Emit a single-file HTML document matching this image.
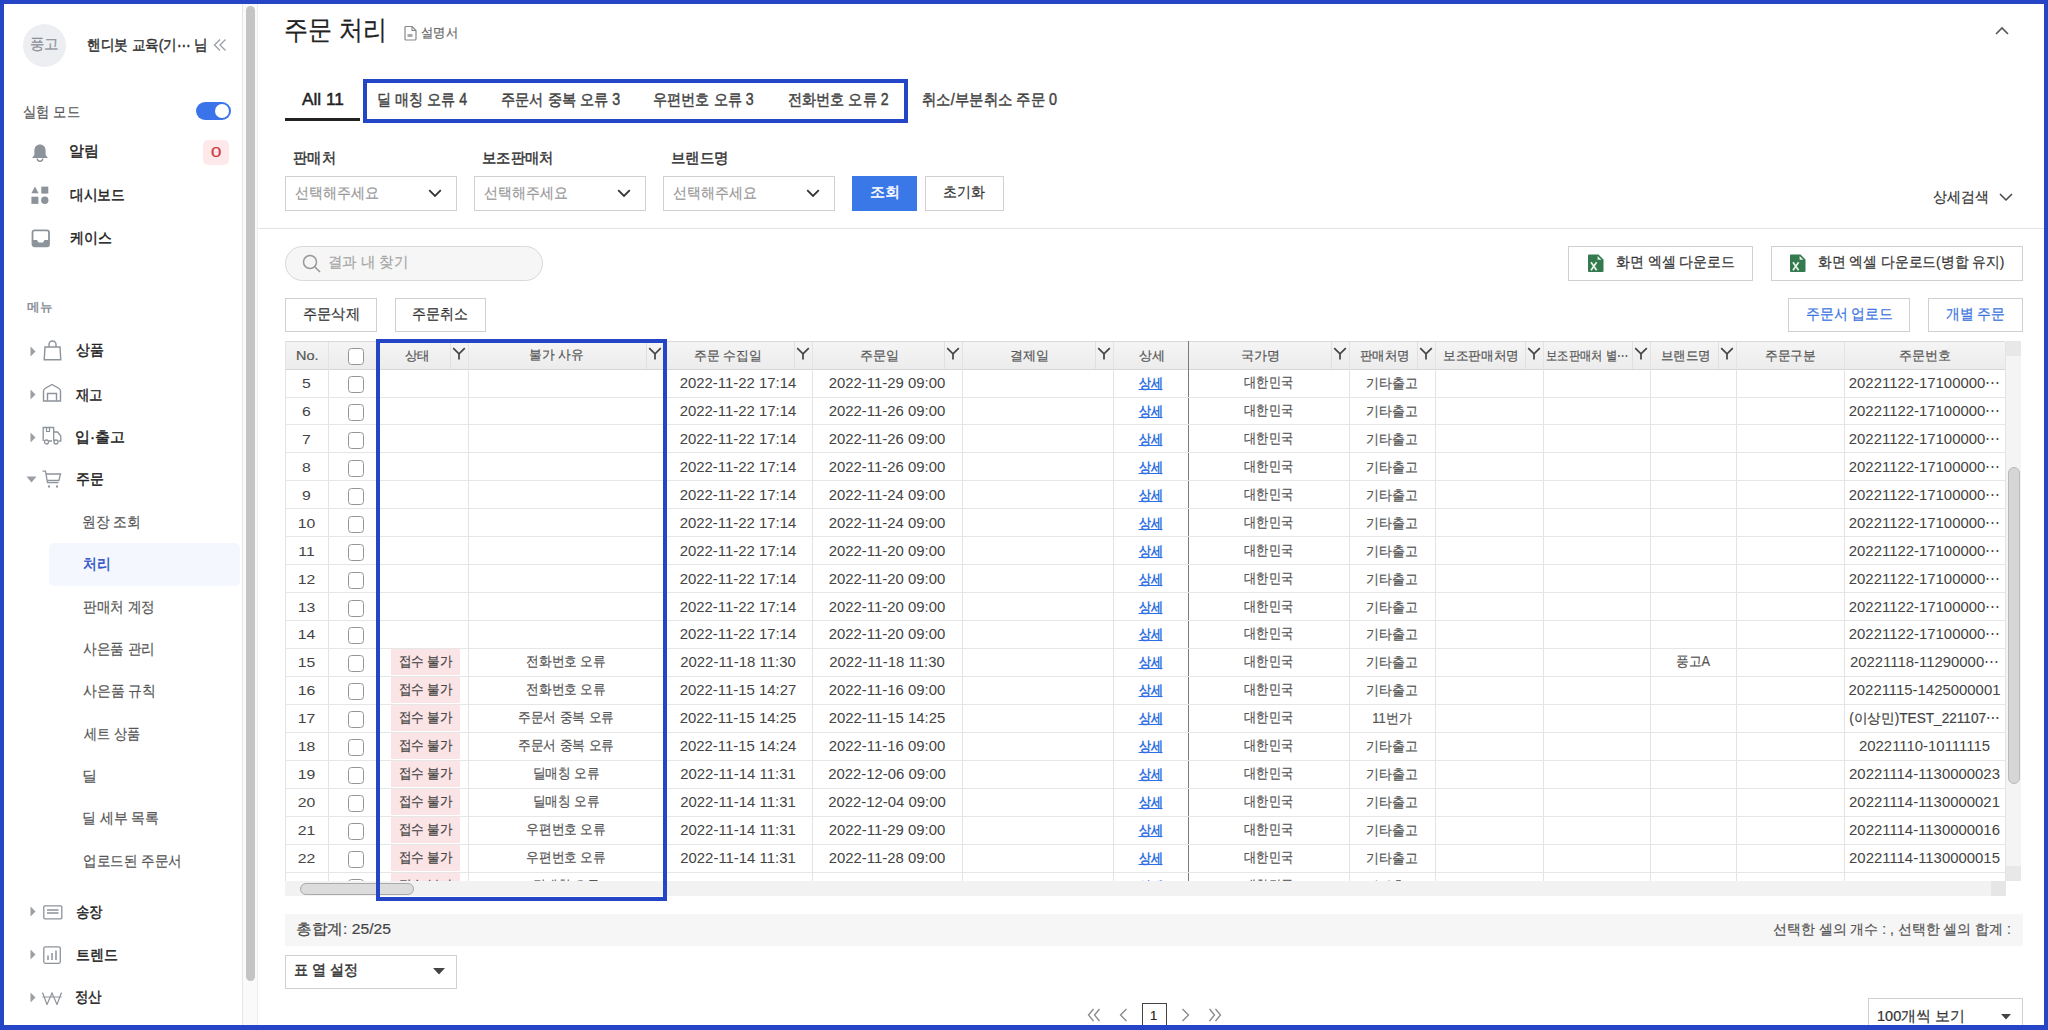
<!DOCTYPE html><html><head><meta charset="utf-8"><style>
*{box-sizing:border-box;margin:0;padding:0}
html,body{width:2048px;height:1030px;overflow:hidden;background:#fff}
body{font-family:"Liberation Sans",sans-serif;color:#333;position:relative}
.ab{position:absolute}
.t{position:absolute;white-space:nowrap;line-height:1;transform-origin:0 0}
.t.n{-webkit-text-stroke:0.2px currentColor}
.sel{position:absolute;border:1px solid #d0d0d0;background:#fff}
.hl{position:absolute;border:4.5px solid #2446c6}
.cb{position:absolute;width:16px;height:16.5px;border:1.8px solid #959595;border-radius:3.5px;background:#fff}
</style></head><body>
<div class="ab" style="left:242px;top:4px;width:1px;height:1021px;background:#e6e6e6"></div>
<div class="ab" style="left:243px;top:4px;width:14px;height:1021px;background:#fafafa"></div>
<div class="ab" style="left:257px;top:4px;width:1px;height:1021px;background:#ececec"></div>
<div class="ab" style="left:246px;top:6px;width:9px;height:975px;background:#c4c4c4;border-radius:5px"></div>
<div class="ab" style="left:23px;top:24px;width:43px;height:43px;border-radius:50%;background:#eceef1"></div>
<div class="t n" style="left:30.04px;top:36.0px;font-size:15.0px;color:#8b8f96;font-weight:normal;transform:scaleX(0.963);">풍고</div>
<div class="t" style="left:87.09px;top:37.0px;font-size:15.0px;color:#333;font-weight:normal;transform:scaleX(0.9077);-webkit-text-stroke:0.45px currentColor;">핸디봇 교육(기⋯ 님</div>
<svg class="ab" style="left:212px;top:38px" width="16" height="14" viewBox="0 0 16 14"><path d="M8 1.5 L2.5 7 L8 12.5 M13.5 1.5 L8 7 L13.5 12.5" fill="none" stroke="#9a9ea5" stroke-width="1.3"/></svg>
<div class="t n" style="left:23.11px;top:104.0px;font-size:15.0px;color:#555;font-weight:normal;transform:scaleX(0.8871);">실험 모드</div>
<div class="ab" style="left:196px;top:102px;width:35px;height:18px;border-radius:9px;background:#3b74ea"></div>
<div class="ab" style="left:214.5px;top:104px;width:14px;height:14px;border-radius:50%;background:#fff"></div>
<svg class="ab" style="left:30px;top:143px" width="20" height="20" viewBox="0 0 20 20"><path d="M10 1.5c-3.3 0-5.6 2.6-5.6 6v4.2L2.2 15h15.6l-2.2-3.3V7.5c0-3.4-2.3-6-5.6-6z" fill="#8d939b"/><path d="M7.3 15.5a2.7 2.7 0 0 0 5.4 0" fill="none" stroke="#8d939b" stroke-width="1.4"/></svg>
<div class="t" style="left:69.0px;top:143.0px;font-size:15.0px;color:#222;font-weight:normal;transform:scaleX(1.0);-webkit-text-stroke:0.45px currentColor;">알림</div>
<div class="ab" style="left:203px;top:140px;width:26px;height:25px;border-radius:5px;background:#fde9ea"></div>
<div class="t n" style="left:210.67px;top:145.0px;font-size:14.0px;color:#d33a45;font-weight:normal;transform:scaleX(1.3333);">0</div>
<svg class="ab" style="left:31px;top:186px" width="18" height="19" viewBox="0 0 18 19"><path d="M4 0.5 L7.6 7.3 L0.4 7.3Z" fill="#8d939b"/><rect x="10.3" y="0.6" width="7" height="7" fill="#8d939b"/><rect x="0.4" y="10.7" width="7" height="7.2" fill="#8d939b"/><circle cx="13.8" cy="14.3" r="3.7" fill="#8d939b"/></svg>
<div class="t" style="left:70.09px;top:187.0px;font-size:15.0px;color:#222;font-weight:normal;transform:scaleX(0.9138);-webkit-text-stroke:0.45px currentColor;">대시보드</div>
<svg class="ab" style="left:31px;top:229px" width="20" height="19" viewBox="0 0 20 19"><rect x="1.5" y="1.3" width="16.5" height="16" rx="2" fill="none" stroke="#8d939b" stroke-width="1.8"/><path d="M1.5 11 h4.5 l1.5 2.4 h4.5 l1.5-2.4 h4.5 v5.3 a1 1 0 0 1-1 1 h-14.5 a1 1 0 0 1-1-1z" fill="#8d939b"/></svg>
<div class="t" style="left:70.07px;top:230.0px;font-size:15.0px;color:#222;font-weight:normal;transform:scaleX(0.9302);-webkit-text-stroke:0.45px currentColor;">케이스</div>
<div class="t" style="left:26.95px;top:301.0px;font-size:12.0px;color:#8b9099;font-weight:bold;transform:scaleX(1.0455);">메뉴</div>
<svg class="ab" style="left:30px;top:346px" width="6" height="11" viewBox="0 0 6 11"><path d="M0.5 0.5 L5.5 5.5 L0.5 10.5Z" fill="#9a9ea5"/></svg>
<svg class="ab" style="left:43px;top:340px" width="19" height="21" viewBox="0 0 19 21"><path d="M2 7 h15 l0.8 12.8 h-16.6z" fill="none" stroke="#8d939b" stroke-width="1.4"/><path d="M6 7 V4.5 a3.5 3.5 0 0 1 7 0 V7" fill="none" stroke="#8d939b" stroke-width="1.4"/></svg>
<div class="t" style="left:76.07px;top:342.0px;font-size:15.0px;color:#222;font-weight:normal;transform:scaleX(0.9286);-webkit-text-stroke:0.45px currentColor;">상품</div>
<svg class="ab" style="left:30px;top:389px" width="6" height="11" viewBox="0 0 6 11"><path d="M0.5 0.5 L5.5 5.5 L0.5 10.5Z" fill="#9a9ea5"/></svg>
<svg class="ab" style="left:42px;top:383px" width="20" height="19" viewBox="0 0 20 19"><path d="M1.5 18 V8 Q1.5 6.5 3 5.5 L10 1.5 L17 5.5 Q18.5 6.5 18.5 8 V18z" fill="none" stroke="#8d939b" stroke-width="1.4"/><path d="M5.5 18 V10.5 h9 V18" fill="none" stroke="#8d939b" stroke-width="1.4"/></svg>
<div class="t" style="left:76.0px;top:387.0px;font-size:15.0px;color:#222;font-weight:normal;transform:scaleX(0.8966);-webkit-text-stroke:0.45px currentColor;">재고</div>
<svg class="ab" style="left:30px;top:432px" width="6" height="11" viewBox="0 0 6 11"><path d="M0.5 0.5 L5.5 5.5 L0.5 10.5Z" fill="#9a9ea5"/></svg>
<svg class="ab" style="left:42px;top:426px" width="20" height="20" viewBox="0 0 20 20"><path d="M1.2 15 V1.5 h10.5 V15 M11.7 6 h3.8 l3.3 4 V15 h-2 M7 15 h3" fill="none" stroke="#8d939b" stroke-width="1.3"/><path d="M4.5 1.5 v4 h3 v-4" fill="none" stroke="#8d939b" stroke-width="1.2"/><circle cx="4.5" cy="16" r="2" fill="#fff" stroke="#8d939b" stroke-width="1.3"/><circle cx="14" cy="16" r="2" fill="#fff" stroke="#8d939b" stroke-width="1.3"/></svg>
<div class="t" style="left:75.0px;top:429.0px;font-size:15.0px;color:#222;font-weight:normal;transform:scaleX(1.0);-webkit-text-stroke:0.45px currentColor;">입·출고</div>
<svg class="ab" style="left:26px;top:476px" width="11" height="7" viewBox="0 0 11 7"><path d="M0.5 0.5 L10.5 0.5 L5.5 6.5Z" fill="#9a9ea5"/></svg>
<svg class="ab" style="left:42px;top:470px" width="20" height="19" viewBox="0 0 20 19"><path d="M0.5 1.2 h3 l2 11.5 h11" fill="none" stroke="#8d939b" stroke-width="1.3"/><path d="M4 4 h14.5 l-1.6 6.5 h-11.5" fill="none" stroke="#8d939b" stroke-width="1.3"/><rect x="6" y="15.5" width="2" height="2" fill="#8d939b"/><rect x="14" y="15.5" width="2" height="2" fill="#8d939b"/></svg>
<div class="t" style="left:76.07px;top:471.0px;font-size:15.0px;color:#222;font-weight:normal;transform:scaleX(0.9286);-webkit-text-stroke:0.45px currentColor;">주문</div>
<div class="ab" style="left:49px;top:543px;width:191px;height:43px;background:#f4f7fd;border-radius:5px"></div>
<div class="t n" style="left:82.17px;top:514.0px;font-size:15.0px;color:#555;font-weight:normal;transform:scaleX(0.9167);">원장 조회</div>
<div class="t" style="left:83.07px;top:556.0px;font-size:15.0px;color:#2b50c8;font-weight:normal;transform:scaleX(0.9259);-webkit-text-stroke:0.45px currentColor;">처리</div>
<div class="t n" style="left:83.09px;top:599.0px;font-size:15.0px;color:#555;font-weight:normal;transform:scaleX(0.9079);">판매처 계정</div>
<div class="t n" style="left:83.09px;top:641.0px;font-size:15.0px;color:#555;font-weight:normal;transform:scaleX(0.9079);">사은품 관리</div>
<div class="t n" style="left:83.08px;top:683.0px;font-size:15.0px;color:#555;font-weight:normal;transform:scaleX(0.9211);">사은품 규칙</div>
<div class="t n" style="left:84.0px;top:726.0px;font-size:15.0px;color:#555;font-weight:normal;transform:scaleX(0.873);">세트 상품</div>
<div class="t n" style="left:82.0px;top:768.0px;font-size:15.0px;color:#555;font-weight:normal;transform:scaleX(1.0);">딜</div>
<div class="t n" style="left:82.15px;top:810.0px;font-size:15.0px;color:#555;font-weight:normal;transform:scaleX(0.9241);">딜 세부 목록</div>
<div class="t n" style="left:83.09px;top:853.0px;font-size:15.0px;color:#555;font-weight:normal;transform:scaleX(0.9057);">업로드된 주문서</div>
<svg class="ab" style="left:30px;top:906px" width="6" height="11" viewBox="0 0 6 11"><path d="M0.5 0.5 L5.5 5.5 L0.5 10.5Z" fill="#9a9ea5"/></svg>
<svg class="ab" style="left:43px;top:905px" width="20" height="15" viewBox="0 0 20 15"><rect x="0.8" y="0.8" width="18" height="13" rx="1" fill="none" stroke="#8d939b" stroke-width="1.3"/><path d="M4 5 h11.5 M4 8 h11.5" stroke="#8d939b" stroke-width="1.3"/></svg>
<div class="t" style="left:76.1px;top:904.0px;font-size:15.0px;color:#222;font-weight:normal;transform:scaleX(0.8966);-webkit-text-stroke:0.45px currentColor;">송장</div>
<svg class="ab" style="left:30px;top:949px" width="6" height="11" viewBox="0 0 6 11"><path d="M0.5 0.5 L5.5 5.5 L0.5 10.5Z" fill="#9a9ea5"/></svg>
<svg class="ab" style="left:43px;top:946px" width="19" height="19" viewBox="0 0 19 19"><rect x="0.8" y="0.8" width="16.5" height="16.5" rx="1.5" fill="none" stroke="#8d939b" stroke-width="1.3"/><path d="M5 14 V9.5 M9 14 V7 M13 14 V4.5" stroke="#8d939b" stroke-width="1.5"/></svg>
<div class="t" style="left:76.07px;top:947.0px;font-size:15.0px;color:#222;font-weight:normal;transform:scaleX(0.9302);-webkit-text-stroke:0.45px currentColor;">트렌드</div>
<svg class="ab" style="left:30px;top:992px" width="6" height="11" viewBox="0 0 6 11"><path d="M0.5 0.5 L5.5 5.5 L0.5 10.5Z" fill="#9a9ea5"/></svg>
<svg class="ab" style="left:42px;top:992px" width="20" height="13" viewBox="0 0 20 13"><path d="M0.5 0.5 L5 12.5 L10 1 L15 12.5 L19.5 0.5 M0.5 5 h19" fill="none" stroke="#8d939b" stroke-width="1.2"/></svg>
<div class="t" style="left:75.1px;top:989.0px;font-size:15.0px;color:#222;font-weight:normal;transform:scaleX(0.8966);-webkit-text-stroke:0.45px currentColor;">정산</div>
<div class="t n" style="left:284.22px;top:17.0px;font-size:27.0px;color:#222;font-weight:normal;transform:scaleX(0.8909);">주문 처리</div>
<svg class="ab" style="left:404px;top:26px" width="13" height="15" viewBox="0 0 13 15"><path d="M1 1.5 a1 1 0 0 1 1-1 h6 l4 4 v8.5 a1 1 0 0 1-1 1 h-9 a1 1 0 0 1-1-1z" fill="none" stroke="#888" stroke-width="1.2"/><path d="M8 0.5 v4 h4" fill="none" stroke="#888" stroke-width="1.1"/><rect x="3.5" y="8" width="5" height="3" fill="#aaa"/></svg>
<div class="t n" style="left:421.06px;top:26.0px;font-size:13.0px;color:#666;font-weight:normal;transform:scaleX(0.9444);">설명서</div>
<svg class="ab" style="left:1995px;top:26px" width="14" height="9" viewBox="0 0 14 9"><path d="M1 8 L7 2 L13 8" fill="none" stroke="#555" stroke-width="1.6"/></svg>
<div class="t" style="left:302.0px;top:92.0px;font-size:16.0px;color:#222;font-weight:normal;transform:scaleX(1.0789);-webkit-text-stroke:0.45px currentColor;">All 11</div>
<div class="ab" style="left:285px;top:118px;width:75px;height:2.5px;background:#222"></div>
<div class="t" style="left:377.24px;top:92.0px;font-size:16.0px;color:#444;font-weight:normal;transform:scaleX(0.88);-webkit-text-stroke:0.45px currentColor;">딜 매칭 오류 4</div>
<div class="t" style="left:501.11px;top:92.0px;font-size:16.0px;color:#444;font-weight:normal;transform:scaleX(0.8872);-webkit-text-stroke:0.45px currentColor;">주문서 중복 오류 3</div>
<div class="t" style="left:653.12px;top:92.0px;font-size:16.0px;color:#444;font-weight:normal;transform:scaleX(0.885);-webkit-text-stroke:0.45px currentColor;">우편번호 오류 3</div>
<div class="t" style="left:788.12px;top:92.0px;font-size:16.0px;color:#444;font-weight:normal;transform:scaleX(0.8839);-webkit-text-stroke:0.45px currentColor;">전화번호 오류 2</div>
<div class="t" style="left:922.1px;top:92.0px;font-size:16.0px;color:#444;font-weight:normal;transform:scaleX(0.8993);-webkit-text-stroke:0.45px currentColor;">취소/부분취소 주문 0</div>
<div class="hl" style="left:363px;top:79px;width:545px;height:44px"></div>
<div class="t" style="left:293.05px;top:150.0px;font-size:15.0px;color:#333;font-weight:normal;transform:scaleX(0.9524);-webkit-text-stroke:0.45px currentColor;">판매처</div>
<div class="t" style="left:482.04px;top:150.0px;font-size:15.0px;color:#333;font-weight:normal;transform:scaleX(0.9583);-webkit-text-stroke:0.45px currentColor;">보조판매처</div>
<div class="t" style="left:671.04px;top:150.0px;font-size:15.0px;color:#333;font-weight:normal;transform:scaleX(0.9649);-webkit-text-stroke:0.45px currentColor;">브랜드명</div>
<div class="sel" style="left:285px;top:176px;width:172px;height:35px"></div>
<div class="t n" style="left:295.07px;top:185.0px;font-size:15.0px;color:#9a9a9a;font-weight:normal;transform:scaleX(0.9318);">선택해주세요</div>
<svg class="ab" style="left:428px;top:189px" width="14" height="9" viewBox="0 0 14 9"><path d="M1.2 1.2 L7 7 L12.8 1.2" fill="none" stroke="#333" stroke-width="1.8"/></svg>
<div class="sel" style="left:474px;top:176px;width:172px;height:35px"></div>
<div class="t n" style="left:484.07px;top:185.0px;font-size:15.0px;color:#9a9a9a;font-weight:normal;transform:scaleX(0.9318);">선택해주세요</div>
<svg class="ab" style="left:617px;top:189px" width="14" height="9" viewBox="0 0 14 9"><path d="M1.2 1.2 L7 7 L12.8 1.2" fill="none" stroke="#333" stroke-width="1.8"/></svg>
<div class="sel" style="left:663px;top:176px;width:172px;height:35px"></div>
<div class="t n" style="left:673.07px;top:185.0px;font-size:15.0px;color:#9a9a9a;font-weight:normal;transform:scaleX(0.9318);">선택해주세요</div>
<svg class="ab" style="left:806px;top:189px" width="14" height="9" viewBox="0 0 14 9"><path d="M1.2 1.2 L7 7 L12.8 1.2" fill="none" stroke="#333" stroke-width="1.8"/></svg>
<div class="ab" style="left:852px;top:176px;width:65px;height:35px;background:#3b78e7"></div>
<div class="t" style="left:870.0px;top:184.0px;font-size:15.0px;color:#fff;font-weight:normal;transform:scaleX(1.0);-webkit-text-stroke:0.45px currentColor;">조회</div>
<div class="sel" style="left:925px;top:176px;width:79px;height:35px"></div>
<div class="t n" style="left:943.14px;top:184.0px;font-size:15.0px;color:#333;font-weight:normal;transform:scaleX(0.9302);">초기화</div>
<div class="t n" style="left:1933.07px;top:189.0px;font-size:15.0px;color:#333;font-weight:normal;transform:scaleX(0.9298);">상세검색</div>
<svg class="ab" style="left:1999px;top:193px" width="14" height="9" viewBox="0 0 14 9"><path d="M1 1 L7 7 L13 1" fill="none" stroke="#444" stroke-width="1.5"/></svg>
<div class="ab" style="left:258px;top:228px;width:1786px;height:1px;background:#e3e3e3"></div>
<div class="ab" style="left:285px;top:246px;width:258px;height:35px;border-radius:18px;background:#f6f6f6;border:1px solid #d9d9d9"></div>
<svg class="ab" style="left:302px;top:254px" width="20" height="19" viewBox="0 0 20 19"><circle cx="8" cy="8" r="6.5" fill="none" stroke="#999" stroke-width="1.5"/><path d="M12.8 12.8 L18 18" stroke="#999" stroke-width="1.6"/></svg>
<div class="t n" style="left:328.08px;top:254.0px;font-size:15.0px;color:#a5a5a5;font-weight:normal;transform:scaleX(0.962);">결과 내 찾기</div>
<div class="sel" style="left:1568px;top:246px;width:185px;height:35px"></div>
<svg class="ab" style="left:1588px;top:254px" width="16" height="18" viewBox="0 0 16 18"><path d="M1 0.5 h9.5 l5 5 v11.5 a1 1 0 0 1 -1 1 h-13.5 a1 1 0 0 1 -1 -1 v-15.5 a1 1 0 0 1 1 -1z" fill="#347a4e"/><path d="M9.6 2 V5.8 H13.4z" fill="#e9f5ec"/><path d="M3 8.3 L8.6 16.2 M8.6 8.3 L3 16.2" stroke="#e9f5ec" stroke-width="1.7"/></svg>
<div class="t n" style="left:1616.07px;top:254.0px;font-size:15.0px;color:#333;font-weight:normal;transform:scaleX(0.9286);">화면 엑셀 다운로드</div>
<div class="sel" style="left:1771px;top:246px;width:252px;height:35px"></div>
<svg class="ab" style="left:1790px;top:254px" width="16" height="18" viewBox="0 0 16 18"><path d="M1 0.5 h9.5 l5 5 v11.5 a1 1 0 0 1 -1 1 h-13.5 a1 1 0 0 1 -1 -1 v-15.5 a1 1 0 0 1 1 -1z" fill="#347a4e"/><path d="M9.6 2 V5.8 H13.4z" fill="#e9f5ec"/><path d="M3 8.3 L8.6 16.2 M8.6 8.3 L3 16.2" stroke="#e9f5ec" stroke-width="1.7"/></svg>
<div class="t n" style="left:1818.08px;top:254.0px;font-size:15.0px;color:#333;font-weight:normal;transform:scaleX(0.9204);">화면 엑셀 다운로드(병합 유지)</div>
<div class="sel" style="left:285px;top:298px;width:92px;height:34px"></div>
<div class="t n" style="left:303.05px;top:306.0px;font-size:15.0px;color:#333;font-weight:normal;transform:scaleX(0.9474);">주문삭제</div>
<div class="sel" style="left:395px;top:298px;width:91px;height:34px"></div>
<div class="t n" style="left:412.07px;top:306.0px;font-size:15.0px;color:#333;font-weight:normal;transform:scaleX(0.931);">주문취소</div>
<div class="sel" style="left:1788px;top:298px;width:122px;height:34px"></div>
<div class="t n" style="left:1806.08px;top:306.0px;font-size:15.0px;color:#3a74e0;font-weight:normal;transform:scaleX(0.9239);">주문서 업로드</div>
<div class="sel" style="left:1928px;top:298px;width:95px;height:34px"></div>
<div class="t n" style="left:1946.08px;top:306.0px;font-size:15.0px;color:#3a74e0;font-weight:normal;transform:scaleX(0.9194);">개별 주문</div>
<div class="ab" style="left:285px;top:341px;width:1720px;height:540px;overflow:hidden">
<div class="ab" style="left:0;top:0;width:1720px;height:28px;background:linear-gradient(#f5f5f5,#ececec)"></div>
<div class="ab" style="left:0;top:0;width:1720px;height:1px;background:#d9d9d9"></div>
<div class="ab" style="left:0;top:28px;width:1720px;height:1px;background:#d6d6d6"></div>
</div>
<div class="t n" style="left:295.89px;top:349.0px;font-size:13.0px;color:#555;font-weight:normal;transform:scaleX(1.1111);">No.</div>
<div class="cb" style="left:348px;top:348px"></div>
<div class="ab" style="left:450px;top:342px;width:1px;height:27px;background:#e0e0e0"></div>
<svg class="ab" style="left:452px;top:347px" width="14" height="13" viewBox="0 0 14 13"><path d="M1.2 1.2 L7 6.8 L12.8 1.2 M7 6.8 V12.5" fill="none" stroke="#444" stroke-width="1.7"/></svg>
<div class="t n" style="left:405.04px;top:349.0px;font-size:13.0px;color:#555;font-weight:normal;transform:scaleX(0.9565);">상태</div>
<div class="ab" style="left:646px;top:342px;width:1px;height:27px;background:#e0e0e0"></div>
<svg class="ab" style="left:648px;top:347px" width="14" height="13" viewBox="0 0 14 13"><path d="M1.2 1.2 L7 6.8 L12.8 1.2 M7 6.8 V12.5" fill="none" stroke="#444" stroke-width="1.7"/></svg>
<div class="t n" style="left:529.04px;top:348.0px;font-size:13.0px;color:#555;font-weight:normal;transform:scaleX(0.9808);">불가 사유</div>
<div class="ab" style="left:794px;top:342px;width:1px;height:27px;background:#e0e0e0"></div>
<svg class="ab" style="left:796px;top:347px" width="14" height="13" viewBox="0 0 14 13"><path d="M1.2 1.2 L7 6.8 L12.8 1.2 M7 6.8 V12.5" fill="none" stroke="#444" stroke-width="1.7"/></svg>
<div class="t n" style="left:694.03px;top:349.0px;font-size:13.0px;color:#555;font-weight:normal;transform:scaleX(0.9846);">주문 수집일</div>
<div class="ab" style="left:944px;top:342px;width:1px;height:27px;background:#e0e0e0"></div>
<svg class="ab" style="left:946px;top:347px" width="14" height="13" viewBox="0 0 14 13"><path d="M1.2 1.2 L7 6.8 L12.8 1.2 M7 6.8 V12.5" fill="none" stroke="#444" stroke-width="1.7"/></svg>
<div class="t n" style="left:860.0px;top:349.0px;font-size:13.0px;color:#555;font-weight:normal;transform:scaleX(1.0);">주문일</div>
<div class="ab" style="left:1095px;top:342px;width:1px;height:27px;background:#e0e0e0"></div>
<svg class="ab" style="left:1097px;top:347px" width="14" height="13" viewBox="0 0 14 13"><path d="M1.2 1.2 L7 6.8 L12.8 1.2 M7 6.8 V12.5" fill="none" stroke="#444" stroke-width="1.7"/></svg>
<div class="t n" style="left:1010.0px;top:349.0px;font-size:13.0px;color:#555;font-weight:normal;transform:scaleX(1.0);">결제일</div>
<div class="t n" style="left:1139.0px;top:349.0px;font-size:13.0px;color:#555;font-weight:normal;transform:scaleX(1.0);">상세</div>
<div class="ab" style="left:1331px;top:342px;width:1px;height:27px;background:#e0e0e0"></div>
<svg class="ab" style="left:1333px;top:347px" width="14" height="13" viewBox="0 0 14 13"><path d="M1.2 1.2 L7 6.8 L12.8 1.2 M7 6.8 V12.5" fill="none" stroke="#444" stroke-width="1.7"/></svg>
<div class="t n" style="left:1241.0px;top:349.0px;font-size:13.0px;color:#555;font-weight:normal;transform:scaleX(1.0);">국가명</div>
<div class="ab" style="left:1417px;top:342px;width:1px;height:27px;background:#e0e0e0"></div>
<svg class="ab" style="left:1419px;top:347px" width="14" height="13" viewBox="0 0 14 13"><path d="M1.2 1.2 L7 6.8 L12.8 1.2 M7 6.8 V12.5" fill="none" stroke="#444" stroke-width="1.7"/></svg>
<div class="t n" style="left:1360.04px;top:349.0px;font-size:13.0px;color:#555;font-weight:normal;transform:scaleX(0.9592);">판매처명</div>
<div class="ab" style="left:1525px;top:342px;width:1px;height:27px;background:#e0e0e0"></div>
<svg class="ab" style="left:1527px;top:347px" width="14" height="13" viewBox="0 0 14 13"><path d="M1.2 1.2 L7 6.8 L12.8 1.2 M7 6.8 V12.5" fill="none" stroke="#444" stroke-width="1.7"/></svg>
<div class="t n" style="left:1443.05px;top:349.0px;font-size:13.0px;color:#555;font-weight:normal;transform:scaleX(0.973);">보조판매처명</div>
<div class="ab" style="left:1632px;top:342px;width:1px;height:27px;background:#e0e0e0"></div>
<svg class="ab" style="left:1634px;top:347px" width="14" height="13" viewBox="0 0 14 13"><path d="M1.2 1.2 L7 6.8 L12.8 1.2 M7 6.8 V12.5" fill="none" stroke="#444" stroke-width="1.7"/></svg>
<div class="t n" style="left:1546.26px;top:349.0px;font-size:13.0px;color:#555;font-weight:normal;transform:scaleX(0.8696);">보조판매처 별⋯</div>
<div class="ab" style="left:1718px;top:342px;width:1px;height:27px;background:#e0e0e0"></div>
<svg class="ab" style="left:1720px;top:347px" width="14" height="13" viewBox="0 0 14 13"><path d="M1.2 1.2 L7 6.8 L12.8 1.2 M7 6.8 V12.5" fill="none" stroke="#444" stroke-width="1.7"/></svg>
<div class="t n" style="left:1661.04px;top:349.0px;font-size:13.0px;color:#555;font-weight:normal;transform:scaleX(0.9592);">브랜드명</div>
<div class="t n" style="left:1765.04px;top:349.0px;font-size:13.0px;color:#555;font-weight:normal;transform:scaleX(0.9796);">주문구분</div>
<div class="t n" style="left:1899.0px;top:349.0px;font-size:13.0px;color:#555;font-weight:normal;transform:scaleX(1.0);">주문번호</div>
<div class="ab" style="left:285px;top:341px;width:1px;height:540px;background:#e3e3e3"></div>
<div class="ab" style="left:328px;top:342px;width:1px;height:540px;background:#e3e3e3"></div>
<div class="ab" style="left:376px;top:342px;width:1px;height:540px;background:#e3e3e3"></div>
<div class="ab" style="left:468px;top:342px;width:1px;height:540px;background:#e3e3e3"></div>
<div class="ab" style="left:664px;top:342px;width:1px;height:540px;background:#e3e3e3"></div>
<div class="ab" style="left:812px;top:342px;width:1px;height:540px;background:#e3e3e3"></div>
<div class="ab" style="left:962px;top:342px;width:1px;height:540px;background:#e3e3e3"></div>
<div class="ab" style="left:1113px;top:342px;width:1px;height:540px;background:#e3e3e3"></div>
<div class="ab" style="left:1188px;top:341px;width:1px;height:540px;background:#7a7a7a"></div>
<div class="ab" style="left:1349px;top:342px;width:1px;height:540px;background:#e3e3e3"></div>
<div class="ab" style="left:1435px;top:342px;width:1px;height:540px;background:#e3e3e3"></div>
<div class="ab" style="left:1543px;top:342px;width:1px;height:540px;background:#e3e3e3"></div>
<div class="ab" style="left:1650px;top:342px;width:1px;height:540px;background:#e3e3e3"></div>
<div class="ab" style="left:1736px;top:342px;width:1px;height:540px;background:#e3e3e3"></div>
<div class="ab" style="left:1844px;top:342px;width:1px;height:540px;background:#e3e3e3"></div>
<div class="ab" style="left:2005px;top:342px;width:1px;height:540px;background:#e3e3e3"></div>
<div class="ab" style="left:285px;top:341px;width:1720px;height:540px;overflow:hidden">
<div class="ab" style="left:0;top:56px;width:1720px;height:1px;background:#e6e6e6"></div>
<div class="cb" style="left:63px;top:35px"></div>
<div class="ab" style="left:0;top:83px;width:1720px;height:1px;background:#e6e6e6"></div>
<div class="cb" style="left:63px;top:63px"></div>
<div class="ab" style="left:0;top:111px;width:1720px;height:1px;background:#e6e6e6"></div>
<div class="cb" style="left:63px;top:91px"></div>
<div class="ab" style="left:0;top:139px;width:1720px;height:1px;background:#e6e6e6"></div>
<div class="cb" style="left:63px;top:119px"></div>
<div class="ab" style="left:0;top:167px;width:1720px;height:1px;background:#e6e6e6"></div>
<div class="cb" style="left:63px;top:147px"></div>
<div class="ab" style="left:0;top:195px;width:1720px;height:1px;background:#e6e6e6"></div>
<div class="cb" style="left:63px;top:175px"></div>
<div class="ab" style="left:0;top:223px;width:1720px;height:1px;background:#e6e6e6"></div>
<div class="cb" style="left:63px;top:203px"></div>
<div class="ab" style="left:0;top:251px;width:1720px;height:1px;background:#e6e6e6"></div>
<div class="cb" style="left:63px;top:231px"></div>
<div class="ab" style="left:0;top:279px;width:1720px;height:1px;background:#e6e6e6"></div>
<div class="cb" style="left:63px;top:259px"></div>
<div class="ab" style="left:0;top:307px;width:1720px;height:1px;background:#e6e6e6"></div>
<div class="cb" style="left:63px;top:286px"></div>
<div class="ab" style="left:0;top:335px;width:1720px;height:1px;background:#e6e6e6"></div>
<div class="cb" style="left:63px;top:314px"></div>
<div class="ab" style="left:106px;top:308px;width:69px;height:26px;background:#fbe4e6"></div>
<div class="ab" style="left:0;top:363px;width:1720px;height:1px;background:#e6e6e6"></div>
<div class="cb" style="left:63px;top:342px"></div>
<div class="ab" style="left:106px;top:336px;width:69px;height:26px;background:#fbe4e6"></div>
<div class="ab" style="left:0;top:391px;width:1720px;height:1px;background:#e6e6e6"></div>
<div class="cb" style="left:63px;top:370px"></div>
<div class="ab" style="left:106px;top:364px;width:69px;height:26px;background:#fbe4e6"></div>
<div class="ab" style="left:0;top:419px;width:1720px;height:1px;background:#e6e6e6"></div>
<div class="cb" style="left:63px;top:398px"></div>
<div class="ab" style="left:106px;top:392px;width:69px;height:26px;background:#fbe4e6"></div>
<div class="ab" style="left:0;top:447px;width:1720px;height:1px;background:#e6e6e6"></div>
<div class="cb" style="left:63px;top:426px"></div>
<div class="ab" style="left:106px;top:420px;width:69px;height:26px;background:#fbe4e6"></div>
<div class="ab" style="left:0;top:475px;width:1720px;height:1px;background:#e6e6e6"></div>
<div class="cb" style="left:63px;top:454px"></div>
<div class="ab" style="left:106px;top:448px;width:69px;height:26px;background:#fbe4e6"></div>
<div class="ab" style="left:0;top:503px;width:1720px;height:1px;background:#e6e6e6"></div>
<div class="cb" style="left:63px;top:482px"></div>
<div class="ab" style="left:106px;top:476px;width:69px;height:26px;background:#fbe4e6"></div>
<div class="ab" style="left:0;top:531px;width:1720px;height:1px;background:#e6e6e6"></div>
<div class="cb" style="left:63px;top:510px"></div>
<div class="ab" style="left:106px;top:504px;width:69px;height:26px;background:#fbe4e6"></div>
<div class="ab" style="left:0;top:558px;width:1720px;height:1px;background:#e6e6e6"></div>
<div class="cb" style="left:63px;top:538px"></div>
<div class="ab" style="left:106px;top:532px;width:69px;height:26px;background:#fbe4e6"></div>
<div class="t" style="left:0px;top:36.0px;width:43px;text-align:center;font-size:13.5px;color:#444;font-weight:normal;transform:scaleX(1.1667);transform-origin:50% 0;">5</div>
<div class="t" style="left:379px;top:35.0px;width:148px;text-align:center;font-size:14.0px;color:#444;font-weight:normal;transform:scaleX(1.0648);transform-origin:50% 0;">2022-11-22 17:14</div>
<div class="t" style="left:527px;top:35.0px;width:150px;text-align:center;font-size:14.0px;color:#444;font-weight:normal;transform:scaleX(1.0648);transform-origin:50% 0;">2022-11-29 09:00</div>
<div class="t" style="left:828px;top:35.0px;width:75px;text-align:center;font-size:14.0px;color:#2f6fe4;font-weight:bold;transform:scaleX(0.8571);transform-origin:50% 0;text-decoration:underline">상세</div>
<div class="t n" style="left:903px;top:34.0px;width:161px;text-align:center;font-size:14.0px;color:#555;font-weight:normal;transform:scaleX(0.8704);transform-origin:50% 0;">대한민국</div>
<div class="t n" style="left:1064px;top:35.0px;width:86px;text-align:center;font-size:14.0px;color:#555;font-weight:normal;transform:scaleX(0.9231);transform-origin:50% 0;">기타출고</div>
<div class="t" style="left:1559px;top:35.0px;width:161px;text-align:center;font-size:14.0px;color:#444;font-weight:normal;transform:scaleX(1.0647);transform-origin:50% 0;">20221122-17100000⋯</div>
<div class="t" style="left:0px;top:64.0px;width:43px;text-align:center;font-size:13.5px;color:#444;font-weight:normal;transform:scaleX(1.1667);transform-origin:50% 0;">6</div>
<div class="t" style="left:379px;top:63.0px;width:148px;text-align:center;font-size:14.0px;color:#444;font-weight:normal;transform:scaleX(1.0648);transform-origin:50% 0;">2022-11-22 17:14</div>
<div class="t" style="left:527px;top:63.0px;width:150px;text-align:center;font-size:14.0px;color:#444;font-weight:normal;transform:scaleX(1.0648);transform-origin:50% 0;">2022-11-26 09:00</div>
<div class="t" style="left:828px;top:63.0px;width:75px;text-align:center;font-size:14.0px;color:#2f6fe4;font-weight:bold;transform:scaleX(0.8571);transform-origin:50% 0;text-decoration:underline">상세</div>
<div class="t n" style="left:903px;top:62.0px;width:161px;text-align:center;font-size:14.0px;color:#555;font-weight:normal;transform:scaleX(0.8704);transform-origin:50% 0;">대한민국</div>
<div class="t n" style="left:1064px;top:63.0px;width:86px;text-align:center;font-size:14.0px;color:#555;font-weight:normal;transform:scaleX(0.9231);transform-origin:50% 0;">기타출고</div>
<div class="t" style="left:1559px;top:63.0px;width:161px;text-align:center;font-size:14.0px;color:#444;font-weight:normal;transform:scaleX(1.0647);transform-origin:50% 0;">20221122-17100000⋯</div>
<div class="t" style="left:0px;top:92.0px;width:43px;text-align:center;font-size:13.5px;color:#444;font-weight:normal;transform:scaleX(1.1667);transform-origin:50% 0;">7</div>
<div class="t" style="left:379px;top:91.0px;width:148px;text-align:center;font-size:14.0px;color:#444;font-weight:normal;transform:scaleX(1.0648);transform-origin:50% 0;">2022-11-22 17:14</div>
<div class="t" style="left:527px;top:91.0px;width:150px;text-align:center;font-size:14.0px;color:#444;font-weight:normal;transform:scaleX(1.0648);transform-origin:50% 0;">2022-11-26 09:00</div>
<div class="t" style="left:828px;top:91.0px;width:75px;text-align:center;font-size:14.0px;color:#2f6fe4;font-weight:bold;transform:scaleX(0.8571);transform-origin:50% 0;text-decoration:underline">상세</div>
<div class="t n" style="left:903px;top:90.0px;width:161px;text-align:center;font-size:14.0px;color:#555;font-weight:normal;transform:scaleX(0.8704);transform-origin:50% 0;">대한민국</div>
<div class="t n" style="left:1064px;top:91.0px;width:86px;text-align:center;font-size:14.0px;color:#555;font-weight:normal;transform:scaleX(0.9231);transform-origin:50% 0;">기타출고</div>
<div class="t" style="left:1559px;top:91.0px;width:161px;text-align:center;font-size:14.0px;color:#444;font-weight:normal;transform:scaleX(1.0647);transform-origin:50% 0;">20221122-17100000⋯</div>
<div class="t" style="left:0px;top:120.0px;width:43px;text-align:center;font-size:13.5px;color:#444;font-weight:normal;transform:scaleX(1.1667);transform-origin:50% 0;">8</div>
<div class="t" style="left:379px;top:119.0px;width:148px;text-align:center;font-size:14.0px;color:#444;font-weight:normal;transform:scaleX(1.0648);transform-origin:50% 0;">2022-11-22 17:14</div>
<div class="t" style="left:527px;top:119.0px;width:150px;text-align:center;font-size:14.0px;color:#444;font-weight:normal;transform:scaleX(1.0648);transform-origin:50% 0;">2022-11-26 09:00</div>
<div class="t" style="left:828px;top:119.0px;width:75px;text-align:center;font-size:14.0px;color:#2f6fe4;font-weight:bold;transform:scaleX(0.8571);transform-origin:50% 0;text-decoration:underline">상세</div>
<div class="t n" style="left:903px;top:118.0px;width:161px;text-align:center;font-size:14.0px;color:#555;font-weight:normal;transform:scaleX(0.8704);transform-origin:50% 0;">대한민국</div>
<div class="t n" style="left:1064px;top:119.0px;width:86px;text-align:center;font-size:14.0px;color:#555;font-weight:normal;transform:scaleX(0.9231);transform-origin:50% 0;">기타출고</div>
<div class="t" style="left:1559px;top:119.0px;width:161px;text-align:center;font-size:14.0px;color:#444;font-weight:normal;transform:scaleX(1.0647);transform-origin:50% 0;">20221122-17100000⋯</div>
<div class="t" style="left:0px;top:148.0px;width:43px;text-align:center;font-size:13.5px;color:#444;font-weight:normal;transform:scaleX(1.1667);transform-origin:50% 0;">9</div>
<div class="t" style="left:379px;top:147.0px;width:148px;text-align:center;font-size:14.0px;color:#444;font-weight:normal;transform:scaleX(1.0648);transform-origin:50% 0;">2022-11-22 17:14</div>
<div class="t" style="left:527px;top:147.0px;width:150px;text-align:center;font-size:14.0px;color:#444;font-weight:normal;transform:scaleX(1.0648);transform-origin:50% 0;">2022-11-24 09:00</div>
<div class="t" style="left:828px;top:147.0px;width:75px;text-align:center;font-size:14.0px;color:#2f6fe4;font-weight:bold;transform:scaleX(0.8571);transform-origin:50% 0;text-decoration:underline">상세</div>
<div class="t n" style="left:903px;top:146.0px;width:161px;text-align:center;font-size:14.0px;color:#555;font-weight:normal;transform:scaleX(0.8704);transform-origin:50% 0;">대한민국</div>
<div class="t n" style="left:1064px;top:147.0px;width:86px;text-align:center;font-size:14.0px;color:#555;font-weight:normal;transform:scaleX(0.9231);transform-origin:50% 0;">기타출고</div>
<div class="t" style="left:1559px;top:147.0px;width:161px;text-align:center;font-size:14.0px;color:#444;font-weight:normal;transform:scaleX(1.0647);transform-origin:50% 0;">20221122-17100000⋯</div>
<div class="t" style="left:0px;top:176.0px;width:43px;text-align:center;font-size:13.5px;color:#444;font-weight:normal;transform:scaleX(1.1667);transform-origin:50% 0;">10</div>
<div class="t" style="left:379px;top:175.0px;width:148px;text-align:center;font-size:14.0px;color:#444;font-weight:normal;transform:scaleX(1.0648);transform-origin:50% 0;">2022-11-22 17:14</div>
<div class="t" style="left:527px;top:175.0px;width:150px;text-align:center;font-size:14.0px;color:#444;font-weight:normal;transform:scaleX(1.0648);transform-origin:50% 0;">2022-11-24 09:00</div>
<div class="t" style="left:828px;top:175.0px;width:75px;text-align:center;font-size:14.0px;color:#2f6fe4;font-weight:bold;transform:scaleX(0.8571);transform-origin:50% 0;text-decoration:underline">상세</div>
<div class="t n" style="left:903px;top:174.0px;width:161px;text-align:center;font-size:14.0px;color:#555;font-weight:normal;transform:scaleX(0.8704);transform-origin:50% 0;">대한민국</div>
<div class="t n" style="left:1064px;top:175.0px;width:86px;text-align:center;font-size:14.0px;color:#555;font-weight:normal;transform:scaleX(0.9231);transform-origin:50% 0;">기타출고</div>
<div class="t" style="left:1559px;top:175.0px;width:161px;text-align:center;font-size:14.0px;color:#444;font-weight:normal;transform:scaleX(1.0647);transform-origin:50% 0;">20221122-17100000⋯</div>
<div class="t" style="left:0px;top:204.0px;width:43px;text-align:center;font-size:13.5px;color:#444;font-weight:normal;transform:scaleX(1.1667);transform-origin:50% 0;">11</div>
<div class="t" style="left:379px;top:203.0px;width:148px;text-align:center;font-size:14.0px;color:#444;font-weight:normal;transform:scaleX(1.0648);transform-origin:50% 0;">2022-11-22 17:14</div>
<div class="t" style="left:527px;top:203.0px;width:150px;text-align:center;font-size:14.0px;color:#444;font-weight:normal;transform:scaleX(1.0648);transform-origin:50% 0;">2022-11-20 09:00</div>
<div class="t" style="left:828px;top:203.0px;width:75px;text-align:center;font-size:14.0px;color:#2f6fe4;font-weight:bold;transform:scaleX(0.8571);transform-origin:50% 0;text-decoration:underline">상세</div>
<div class="t n" style="left:903px;top:202.0px;width:161px;text-align:center;font-size:14.0px;color:#555;font-weight:normal;transform:scaleX(0.8704);transform-origin:50% 0;">대한민국</div>
<div class="t n" style="left:1064px;top:203.0px;width:86px;text-align:center;font-size:14.0px;color:#555;font-weight:normal;transform:scaleX(0.9231);transform-origin:50% 0;">기타출고</div>
<div class="t" style="left:1559px;top:203.0px;width:161px;text-align:center;font-size:14.0px;color:#444;font-weight:normal;transform:scaleX(1.0647);transform-origin:50% 0;">20221122-17100000⋯</div>
<div class="t" style="left:0px;top:232.0px;width:43px;text-align:center;font-size:13.5px;color:#444;font-weight:normal;transform:scaleX(1.1667);transform-origin:50% 0;">12</div>
<div class="t" style="left:379px;top:231.0px;width:148px;text-align:center;font-size:14.0px;color:#444;font-weight:normal;transform:scaleX(1.0648);transform-origin:50% 0;">2022-11-22 17:14</div>
<div class="t" style="left:527px;top:231.0px;width:150px;text-align:center;font-size:14.0px;color:#444;font-weight:normal;transform:scaleX(1.0648);transform-origin:50% 0;">2022-11-20 09:00</div>
<div class="t" style="left:828px;top:231.0px;width:75px;text-align:center;font-size:14.0px;color:#2f6fe4;font-weight:bold;transform:scaleX(0.8571);transform-origin:50% 0;text-decoration:underline">상세</div>
<div class="t n" style="left:903px;top:230.0px;width:161px;text-align:center;font-size:14.0px;color:#555;font-weight:normal;transform:scaleX(0.8704);transform-origin:50% 0;">대한민국</div>
<div class="t n" style="left:1064px;top:231.0px;width:86px;text-align:center;font-size:14.0px;color:#555;font-weight:normal;transform:scaleX(0.9231);transform-origin:50% 0;">기타출고</div>
<div class="t" style="left:1559px;top:231.0px;width:161px;text-align:center;font-size:14.0px;color:#444;font-weight:normal;transform:scaleX(1.0647);transform-origin:50% 0;">20221122-17100000⋯</div>
<div class="t" style="left:0px;top:260.0px;width:43px;text-align:center;font-size:13.5px;color:#444;font-weight:normal;transform:scaleX(1.1667);transform-origin:50% 0;">13</div>
<div class="t" style="left:379px;top:259.0px;width:148px;text-align:center;font-size:14.0px;color:#444;font-weight:normal;transform:scaleX(1.0648);transform-origin:50% 0;">2022-11-22 17:14</div>
<div class="t" style="left:527px;top:259.0px;width:150px;text-align:center;font-size:14.0px;color:#444;font-weight:normal;transform:scaleX(1.0648);transform-origin:50% 0;">2022-11-20 09:00</div>
<div class="t" style="left:828px;top:259.0px;width:75px;text-align:center;font-size:14.0px;color:#2f6fe4;font-weight:bold;transform:scaleX(0.8571);transform-origin:50% 0;text-decoration:underline">상세</div>
<div class="t n" style="left:903px;top:258.0px;width:161px;text-align:center;font-size:14.0px;color:#555;font-weight:normal;transform:scaleX(0.8704);transform-origin:50% 0;">대한민국</div>
<div class="t n" style="left:1064px;top:259.0px;width:86px;text-align:center;font-size:14.0px;color:#555;font-weight:normal;transform:scaleX(0.9231);transform-origin:50% 0;">기타출고</div>
<div class="t" style="left:1559px;top:259.0px;width:161px;text-align:center;font-size:14.0px;color:#444;font-weight:normal;transform:scaleX(1.0647);transform-origin:50% 0;">20221122-17100000⋯</div>
<div class="t" style="left:0px;top:287.0px;width:43px;text-align:center;font-size:13.5px;color:#444;font-weight:normal;transform:scaleX(1.1667);transform-origin:50% 0;">14</div>
<div class="t" style="left:379px;top:286.0px;width:148px;text-align:center;font-size:14.0px;color:#444;font-weight:normal;transform:scaleX(1.0648);transform-origin:50% 0;">2022-11-22 17:14</div>
<div class="t" style="left:527px;top:286.0px;width:150px;text-align:center;font-size:14.0px;color:#444;font-weight:normal;transform:scaleX(1.0648);transform-origin:50% 0;">2022-11-20 09:00</div>
<div class="t" style="left:828px;top:286.0px;width:75px;text-align:center;font-size:14.0px;color:#2f6fe4;font-weight:bold;transform:scaleX(0.8571);transform-origin:50% 0;text-decoration:underline">상세</div>
<div class="t n" style="left:903px;top:285.0px;width:161px;text-align:center;font-size:14.0px;color:#555;font-weight:normal;transform:scaleX(0.8704);transform-origin:50% 0;">대한민국</div>
<div class="t n" style="left:1064px;top:286.0px;width:86px;text-align:center;font-size:14.0px;color:#555;font-weight:normal;transform:scaleX(0.9231);transform-origin:50% 0;">기타출고</div>
<div class="t" style="left:1559px;top:286.0px;width:161px;text-align:center;font-size:14.0px;color:#444;font-weight:normal;transform:scaleX(1.0647);transform-origin:50% 0;">20221122-17100000⋯</div>
<div class="t" style="left:0px;top:315.0px;width:43px;text-align:center;font-size:13.5px;color:#444;font-weight:normal;transform:scaleX(1.1667);transform-origin:50% 0;">15</div>
<div class="t n" style="left:106px;top:313.0px;width:69px;text-align:center;font-size:14.0px;color:#444;font-weight:normal;transform:scaleX(0.8966);transform-origin:50% 0;">접수 불가</div>
<div class="t n" style="left:183px;top:313.0px;width:196px;text-align:center;font-size:14.0px;color:#555;font-weight:normal;transform:scaleX(0.9048);transform-origin:50% 0;">전화번호 오류</div>
<div class="t" style="left:379px;top:314.0px;width:148px;text-align:center;font-size:14.0px;color:#444;font-weight:normal;transform:scaleX(1.0648);transform-origin:50% 0;">2022-11-18 11:30</div>
<div class="t" style="left:527px;top:314.0px;width:150px;text-align:center;font-size:14.0px;color:#444;font-weight:normal;transform:scaleX(1.0648);transform-origin:50% 0;">2022-11-18 11:30</div>
<div class="t" style="left:828px;top:314.0px;width:75px;text-align:center;font-size:14.0px;color:#2f6fe4;font-weight:bold;transform:scaleX(0.8571);transform-origin:50% 0;text-decoration:underline">상세</div>
<div class="t n" style="left:903px;top:313.0px;width:161px;text-align:center;font-size:14.0px;color:#555;font-weight:normal;transform:scaleX(0.8704);transform-origin:50% 0;">대한민국</div>
<div class="t n" style="left:1064px;top:314.0px;width:86px;text-align:center;font-size:14.0px;color:#555;font-weight:normal;transform:scaleX(0.9231);transform-origin:50% 0;">기타출고</div>
<div class="t n" style="left:1365px;top:313.0px;width:86px;text-align:center;font-size:14.0px;color:#555;font-weight:normal;transform:scaleX(0.9143);transform-origin:50% 0;">풍고A</div>
<div class="t" style="left:1559px;top:314.0px;width:161px;text-align:center;font-size:14.0px;color:#444;font-weight:normal;transform:scaleX(1.0647);transform-origin:50% 0;">20221118-11290000⋯</div>
<div class="t" style="left:0px;top:343.0px;width:43px;text-align:center;font-size:13.5px;color:#444;font-weight:normal;transform:scaleX(1.1667);transform-origin:50% 0;">16</div>
<div class="t n" style="left:106px;top:341.0px;width:69px;text-align:center;font-size:14.0px;color:#444;font-weight:normal;transform:scaleX(0.8966);transform-origin:50% 0;">접수 불가</div>
<div class="t n" style="left:183px;top:341.0px;width:196px;text-align:center;font-size:14.0px;color:#555;font-weight:normal;transform:scaleX(0.9048);transform-origin:50% 0;">전화번호 오류</div>
<div class="t" style="left:379px;top:342.0px;width:148px;text-align:center;font-size:14.0px;color:#444;font-weight:normal;transform:scaleX(1.0648);transform-origin:50% 0;">2022-11-15 14:27</div>
<div class="t" style="left:527px;top:342.0px;width:150px;text-align:center;font-size:14.0px;color:#444;font-weight:normal;transform:scaleX(1.0648);transform-origin:50% 0;">2022-11-16 09:00</div>
<div class="t" style="left:828px;top:342.0px;width:75px;text-align:center;font-size:14.0px;color:#2f6fe4;font-weight:bold;transform:scaleX(0.8571);transform-origin:50% 0;text-decoration:underline">상세</div>
<div class="t n" style="left:903px;top:341.0px;width:161px;text-align:center;font-size:14.0px;color:#555;font-weight:normal;transform:scaleX(0.8704);transform-origin:50% 0;">대한민국</div>
<div class="t n" style="left:1064px;top:342.0px;width:86px;text-align:center;font-size:14.0px;color:#555;font-weight:normal;transform:scaleX(0.9231);transform-origin:50% 0;">기타출고</div>
<div class="t" style="left:1559px;top:342.0px;width:161px;text-align:center;font-size:14.0px;color:#444;font-weight:normal;transform:scaleX(1.0647);transform-origin:50% 0;">20221115-1425000001</div>
<div class="t" style="left:0px;top:371.0px;width:43px;text-align:center;font-size:13.5px;color:#444;font-weight:normal;transform:scaleX(1.1667);transform-origin:50% 0;">17</div>
<div class="t n" style="left:106px;top:369.0px;width:69px;text-align:center;font-size:14.0px;color:#444;font-weight:normal;transform:scaleX(0.8966);transform-origin:50% 0;">접수 불가</div>
<div class="t n" style="left:183px;top:369.0px;width:196px;text-align:center;font-size:14.0px;color:#555;font-weight:normal;transform:scaleX(0.9048);transform-origin:50% 0;">주문서 중복 오류</div>
<div class="t" style="left:379px;top:370.0px;width:148px;text-align:center;font-size:14.0px;color:#444;font-weight:normal;transform:scaleX(1.0648);transform-origin:50% 0;">2022-11-15 14:25</div>
<div class="t" style="left:527px;top:370.0px;width:150px;text-align:center;font-size:14.0px;color:#444;font-weight:normal;transform:scaleX(1.0648);transform-origin:50% 0;">2022-11-15 14:25</div>
<div class="t" style="left:828px;top:370.0px;width:75px;text-align:center;font-size:14.0px;color:#2f6fe4;font-weight:bold;transform:scaleX(0.8571);transform-origin:50% 0;text-decoration:underline">상세</div>
<div class="t n" style="left:903px;top:369.0px;width:161px;text-align:center;font-size:14.0px;color:#555;font-weight:normal;transform:scaleX(0.8704);transform-origin:50% 0;">대한민국</div>
<div class="t n" style="left:1064px;top:370.0px;width:86px;text-align:center;font-size:14.0px;color:#555;font-weight:normal;transform:scaleX(0.9231);transform-origin:50% 0;">11번가</div>
<div class="t n" style="left:1559px;top:370.0px;width:161px;text-align:center;font-size:14.0px;color:#444;font-weight:normal;transform:scaleX(0.9737);transform-origin:50% 0;">(이상민)TEST_221107⋯</div>
<div class="t" style="left:0px;top:399.0px;width:43px;text-align:center;font-size:13.5px;color:#444;font-weight:normal;transform:scaleX(1.1667);transform-origin:50% 0;">18</div>
<div class="t n" style="left:106px;top:397.0px;width:69px;text-align:center;font-size:14.0px;color:#444;font-weight:normal;transform:scaleX(0.8966);transform-origin:50% 0;">접수 불가</div>
<div class="t n" style="left:183px;top:397.0px;width:196px;text-align:center;font-size:14.0px;color:#555;font-weight:normal;transform:scaleX(0.9048);transform-origin:50% 0;">주문서 중복 오류</div>
<div class="t" style="left:379px;top:398.0px;width:148px;text-align:center;font-size:14.0px;color:#444;font-weight:normal;transform:scaleX(1.0648);transform-origin:50% 0;">2022-11-15 14:24</div>
<div class="t" style="left:527px;top:398.0px;width:150px;text-align:center;font-size:14.0px;color:#444;font-weight:normal;transform:scaleX(1.0648);transform-origin:50% 0;">2022-11-16 09:00</div>
<div class="t" style="left:828px;top:398.0px;width:75px;text-align:center;font-size:14.0px;color:#2f6fe4;font-weight:bold;transform:scaleX(0.8571);transform-origin:50% 0;text-decoration:underline">상세</div>
<div class="t n" style="left:903px;top:397.0px;width:161px;text-align:center;font-size:14.0px;color:#555;font-weight:normal;transform:scaleX(0.8704);transform-origin:50% 0;">대한민국</div>
<div class="t n" style="left:1064px;top:398.0px;width:86px;text-align:center;font-size:14.0px;color:#555;font-weight:normal;transform:scaleX(0.9231);transform-origin:50% 0;">기타출고</div>
<div class="t" style="left:1559px;top:398.0px;width:161px;text-align:center;font-size:14.0px;color:#444;font-weight:normal;transform:scaleX(1.0647);transform-origin:50% 0;">20221110-10111115</div>
<div class="t" style="left:0px;top:427.0px;width:43px;text-align:center;font-size:13.5px;color:#444;font-weight:normal;transform:scaleX(1.1667);transform-origin:50% 0;">19</div>
<div class="t n" style="left:106px;top:425.0px;width:69px;text-align:center;font-size:14.0px;color:#444;font-weight:normal;transform:scaleX(0.8966);transform-origin:50% 0;">접수 불가</div>
<div class="t n" style="left:183px;top:425.0px;width:196px;text-align:center;font-size:14.0px;color:#555;font-weight:normal;transform:scaleX(0.9048);transform-origin:50% 0;">딜매칭 오류</div>
<div class="t" style="left:379px;top:426.0px;width:148px;text-align:center;font-size:14.0px;color:#444;font-weight:normal;transform:scaleX(1.0648);transform-origin:50% 0;">2022-11-14 11:31</div>
<div class="t" style="left:527px;top:426.0px;width:150px;text-align:center;font-size:14.0px;color:#444;font-weight:normal;transform:scaleX(1.0648);transform-origin:50% 0;">2022-12-06 09:00</div>
<div class="t" style="left:828px;top:426.0px;width:75px;text-align:center;font-size:14.0px;color:#2f6fe4;font-weight:bold;transform:scaleX(0.8571);transform-origin:50% 0;text-decoration:underline">상세</div>
<div class="t n" style="left:903px;top:425.0px;width:161px;text-align:center;font-size:14.0px;color:#555;font-weight:normal;transform:scaleX(0.8704);transform-origin:50% 0;">대한민국</div>
<div class="t n" style="left:1064px;top:426.0px;width:86px;text-align:center;font-size:14.0px;color:#555;font-weight:normal;transform:scaleX(0.9231);transform-origin:50% 0;">기타출고</div>
<div class="t" style="left:1559px;top:426.0px;width:161px;text-align:center;font-size:14.0px;color:#444;font-weight:normal;transform:scaleX(1.0647);transform-origin:50% 0;">20221114-1130000023</div>
<div class="t" style="left:0px;top:455.0px;width:43px;text-align:center;font-size:13.5px;color:#444;font-weight:normal;transform:scaleX(1.1667);transform-origin:50% 0;">20</div>
<div class="t n" style="left:106px;top:453.0px;width:69px;text-align:center;font-size:14.0px;color:#444;font-weight:normal;transform:scaleX(0.8966);transform-origin:50% 0;">접수 불가</div>
<div class="t n" style="left:183px;top:453.0px;width:196px;text-align:center;font-size:14.0px;color:#555;font-weight:normal;transform:scaleX(0.9048);transform-origin:50% 0;">딜매칭 오류</div>
<div class="t" style="left:379px;top:454.0px;width:148px;text-align:center;font-size:14.0px;color:#444;font-weight:normal;transform:scaleX(1.0648);transform-origin:50% 0;">2022-11-14 11:31</div>
<div class="t" style="left:527px;top:454.0px;width:150px;text-align:center;font-size:14.0px;color:#444;font-weight:normal;transform:scaleX(1.0648);transform-origin:50% 0;">2022-12-04 09:00</div>
<div class="t" style="left:828px;top:454.0px;width:75px;text-align:center;font-size:14.0px;color:#2f6fe4;font-weight:bold;transform:scaleX(0.8571);transform-origin:50% 0;text-decoration:underline">상세</div>
<div class="t n" style="left:903px;top:453.0px;width:161px;text-align:center;font-size:14.0px;color:#555;font-weight:normal;transform:scaleX(0.8704);transform-origin:50% 0;">대한민국</div>
<div class="t n" style="left:1064px;top:454.0px;width:86px;text-align:center;font-size:14.0px;color:#555;font-weight:normal;transform:scaleX(0.9231);transform-origin:50% 0;">기타출고</div>
<div class="t" style="left:1559px;top:454.0px;width:161px;text-align:center;font-size:14.0px;color:#444;font-weight:normal;transform:scaleX(1.0647);transform-origin:50% 0;">20221114-1130000021</div>
<div class="t" style="left:0px;top:483.0px;width:43px;text-align:center;font-size:13.5px;color:#444;font-weight:normal;transform:scaleX(1.1667);transform-origin:50% 0;">21</div>
<div class="t n" style="left:106px;top:481.0px;width:69px;text-align:center;font-size:14.0px;color:#444;font-weight:normal;transform:scaleX(0.8966);transform-origin:50% 0;">접수 불가</div>
<div class="t n" style="left:183px;top:481.0px;width:196px;text-align:center;font-size:14.0px;color:#555;font-weight:normal;transform:scaleX(0.9048);transform-origin:50% 0;">우편번호 오류</div>
<div class="t" style="left:379px;top:482.0px;width:148px;text-align:center;font-size:14.0px;color:#444;font-weight:normal;transform:scaleX(1.0648);transform-origin:50% 0;">2022-11-14 11:31</div>
<div class="t" style="left:527px;top:482.0px;width:150px;text-align:center;font-size:14.0px;color:#444;font-weight:normal;transform:scaleX(1.0648);transform-origin:50% 0;">2022-11-29 09:00</div>
<div class="t" style="left:828px;top:482.0px;width:75px;text-align:center;font-size:14.0px;color:#2f6fe4;font-weight:bold;transform:scaleX(0.8571);transform-origin:50% 0;text-decoration:underline">상세</div>
<div class="t n" style="left:903px;top:481.0px;width:161px;text-align:center;font-size:14.0px;color:#555;font-weight:normal;transform:scaleX(0.8704);transform-origin:50% 0;">대한민국</div>
<div class="t n" style="left:1064px;top:482.0px;width:86px;text-align:center;font-size:14.0px;color:#555;font-weight:normal;transform:scaleX(0.9231);transform-origin:50% 0;">기타출고</div>
<div class="t" style="left:1559px;top:482.0px;width:161px;text-align:center;font-size:14.0px;color:#444;font-weight:normal;transform:scaleX(1.0647);transform-origin:50% 0;">20221114-1130000016</div>
<div class="t" style="left:0px;top:511.0px;width:43px;text-align:center;font-size:13.5px;color:#444;font-weight:normal;transform:scaleX(1.1667);transform-origin:50% 0;">22</div>
<div class="t n" style="left:106px;top:509.0px;width:69px;text-align:center;font-size:14.0px;color:#444;font-weight:normal;transform:scaleX(0.8966);transform-origin:50% 0;">접수 불가</div>
<div class="t n" style="left:183px;top:509.0px;width:196px;text-align:center;font-size:14.0px;color:#555;font-weight:normal;transform:scaleX(0.9048);transform-origin:50% 0;">우편번호 오류</div>
<div class="t" style="left:379px;top:510.0px;width:148px;text-align:center;font-size:14.0px;color:#444;font-weight:normal;transform:scaleX(1.0648);transform-origin:50% 0;">2022-11-14 11:31</div>
<div class="t" style="left:527px;top:510.0px;width:150px;text-align:center;font-size:14.0px;color:#444;font-weight:normal;transform:scaleX(1.0648);transform-origin:50% 0;">2022-11-28 09:00</div>
<div class="t" style="left:828px;top:510.0px;width:75px;text-align:center;font-size:14.0px;color:#2f6fe4;font-weight:bold;transform:scaleX(0.8571);transform-origin:50% 0;text-decoration:underline">상세</div>
<div class="t n" style="left:903px;top:509.0px;width:161px;text-align:center;font-size:14.0px;color:#555;font-weight:normal;transform:scaleX(0.8704);transform-origin:50% 0;">대한민국</div>
<div class="t n" style="left:1064px;top:510.0px;width:86px;text-align:center;font-size:14.0px;color:#555;font-weight:normal;transform:scaleX(0.9231);transform-origin:50% 0;">기타출고</div>
<div class="t" style="left:1559px;top:510.0px;width:161px;text-align:center;font-size:14.0px;color:#444;font-weight:normal;transform:scaleX(1.0647);transform-origin:50% 0;">20221114-1130000015</div>
<div class="t" style="left:0px;top:539.0px;width:43px;text-align:center;font-size:13.5px;color:#444;font-weight:normal;transform:scaleX(1.1667);transform-origin:50% 0;">23</div>
<div class="t n" style="left:106px;top:537.0px;width:69px;text-align:center;font-size:14.0px;color:#444;font-weight:normal;transform:scaleX(0.8966);transform-origin:50% 0;">접수 불가</div>
<div class="t n" style="left:183px;top:537.0px;width:196px;text-align:center;font-size:14.0px;color:#555;font-weight:normal;transform:scaleX(0.9048);transform-origin:50% 0;">딜매칭 오류</div>
<div class="t" style="left:379px;top:538.0px;width:148px;text-align:center;font-size:14.0px;color:#444;font-weight:normal;transform:scaleX(1.0648);transform-origin:50% 0;">2022-11-14 11:31</div>
<div class="t" style="left:527px;top:538.0px;width:150px;text-align:center;font-size:14.0px;color:#444;font-weight:normal;transform:scaleX(1.0648);transform-origin:50% 0;">2022-12-01 09:00</div>
<div class="t" style="left:828px;top:538.0px;width:75px;text-align:center;font-size:14.0px;color:#2f6fe4;font-weight:bold;transform:scaleX(0.8571);transform-origin:50% 0;text-decoration:underline">상세</div>
<div class="t n" style="left:903px;top:537.0px;width:161px;text-align:center;font-size:14.0px;color:#555;font-weight:normal;transform:scaleX(0.8704);transform-origin:50% 0;">대한민국</div>
<div class="t n" style="left:1064px;top:538.0px;width:86px;text-align:center;font-size:14.0px;color:#555;font-weight:normal;transform:scaleX(0.9231);transform-origin:50% 0;">기타출고</div>
<div class="t" style="left:1559px;top:538.0px;width:161px;text-align:center;font-size:14.0px;color:#444;font-weight:normal;transform:scaleX(1.0647);transform-origin:50% 0;">20221114-1130000011</div>
</div>
<div class="ab" style="left:2006px;top:341px;width:15px;height:540px;background:#f4f4f4"></div>
<div class="ab" style="left:2006px;top:341px;width:15px;height:15px;background:#e8e8e8"></div>
<div class="ab" style="left:2006px;top:866px;width:15px;height:15px;background:#e8e8e8"></div>
<div class="ab" style="left:2008px;top:467px;width:12px;height:317px;border-radius:6px;background:#d6d6d6;border:1px solid #b9b9b9"></div>
<div class="ab" style="left:285px;top:881px;width:1721px;height:15px;background:#f2f2f2"></div>
<div class="ab" style="left:1991px;top:881px;width:15px;height:15px;background:#e6e6e6"></div>
<div class="ab" style="left:300px;top:883px;width:114px;height:12px;border-radius:6px;background:#dcdcdc;border:1px solid #aaa"></div>
<div class="hl" style="left:376px;top:339px;width:291px;height:562px"></div>
<div class="ab" style="left:285px;top:914px;width:1738px;height:32px;background:#f6f6f6"></div>
<div class="t n" style="left:295.91px;top:921.0px;font-size:15.0px;color:#444;font-weight:normal;transform:scaleX(1.0455);">총합계: 25/25</div>
<div class="t n" style="left:1773.0px;top:922.0px;font-size:14.0px;color:#555;font-weight:normal;transform:scaleX(0.9958);">선택한 셀의 개수 : , 선택한 셀의 합계 :</div>
<div class="sel" style="left:285px;top:955px;width:172px;height:34px"></div>
<div class="t" style="left:294.06px;top:962.0px;font-size:15.0px;color:#333;font-weight:normal;transform:scaleX(0.9385);-webkit-text-stroke:0.45px currentColor;">표 열 설정</div>
<svg class="ab" style="left:433px;top:968px" width="12" height="7" viewBox="0 0 12 7"><path d="M0 0 h12 L6 6.5z" fill="#444"/></svg>
<div class="sel" style="left:1868px;top:998px;width:155px;height:40px"></div>
<div class="t n" style="left:1877.0px;top:1009.0px;font-size:14.5px;color:#333;font-weight:normal;transform:scaleX(1.0);">100개씩 보기</div>
<svg class="ab" style="left:2001px;top:1014px" width="10" height="6" viewBox="0 0 10 6"><path d="M0 0 h10 L5 5.5z" fill="#444"/></svg>
<svg class="ab" style="left:1087px;top:1008px" width="14" height="14" viewBox="0 0 14 14"><path d="M6.5 1 L1.5 7 L6.5 13 M12.5 1 L7.5 7 L12.5 13" fill="none" stroke="#888" stroke-width="1.3"/></svg>
<svg class="ab" style="left:1119px;top:1008px" width="9" height="14" viewBox="0 0 9 14"><path d="M7.5 1 L1.5 7 L7.5 13" fill="none" stroke="#888" stroke-width="1.3"/></svg>
<div class="ab" style="left:1142px;top:1003px;width:25px;height:30px;border:1.6px solid #444;background:#fff"></div>
<div class="t n" style="left:1150.0px;top:1009.0px;font-size:13.0px;color:#222;font-weight:normal;transform:scaleX(1.0);">1</div>
<svg class="ab" style="left:1181px;top:1008px" width="9" height="14" viewBox="0 0 9 14"><path d="M1.5 1 L7.5 7 L1.5 13" fill="none" stroke="#888" stroke-width="1.3"/></svg>
<svg class="ab" style="left:1208px;top:1008px" width="14" height="14" viewBox="0 0 14 14"><path d="M1.5 1 L6.5 7 L1.5 13 M7.5 1 L12.5 7 L7.5 13" fill="none" stroke="#888" stroke-width="1.3"/></svg>
<div class="ab" style="left:0;top:0;width:2048px;height:4px;background:#2446c6"></div>
<div class="ab" style="left:0;top:1025px;width:2048px;height:5px;background:#2446c6"></div>
<div class="ab" style="left:0;top:0;width:4px;height:1030px;background:#2446c6"></div>
<div class="ab" style="left:2044px;top:0;width:4px;height:1030px;background:#2446c6"></div>
</body></html>
